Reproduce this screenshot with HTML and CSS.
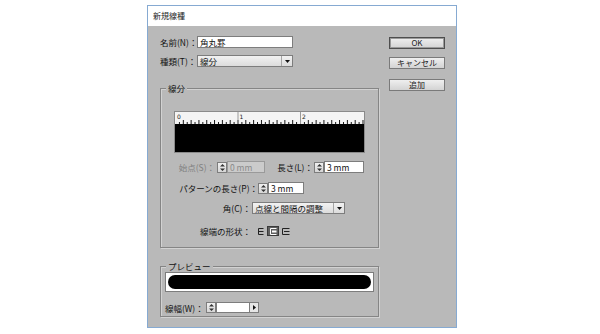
FILE: index.html
```html
<!DOCTYPE html>
<html lang="ja">
<head>
<meta charset="utf-8">
<title>新規線種</title>
<link rel="stylesheet" href="styles.css">
</head>
<body>
<div class="dialog">
  <div class="titlebar">新規線種</div>
  <div class="body">
    <div class="main">
      <div class="row row-name">
        <span class="lbl lbl-top">名前(N)：</span>
        <span class="field field-name">角丸罫</span>
      </div>
      <div class="row row-type">
        <span class="lbl lbl-top">種類(T)：</span>
        <span class="select select-type"><span class="sel-text">線分</span><span class="sel-arrow"><svg width="5" height="3" viewBox="0 0 5 3"><path d="M0 0H5L2.5 3Z" fill="#111"/></svg></span></span>
      </div>

      <div class="group group-dash">
        <span class="legend">線分</span>
        <div class="ruler">
          <svg width="189" height="40" viewBox="0 0 189 40">
            <defs>
              <pattern id="ticks" width="7.8125" height="12" patternUnits="userSpaceOnUse">
                <rect x="0" y="8" width="1" height="4" fill="#111"/>
                <rect x="3.9" y="10" width="1" height="2" fill="#111"/>
              </pattern>
            </defs>
            <rect x="0" y="0" width="189" height="12" fill="#f4f4f4"/>
            <rect x="1" y="0" width="188" height="12" fill="url(#ticks)"/>
            <rect x="62.5" y="0" width="1" height="12" fill="#9a9a9a"/>
            <rect x="125" y="0" width="1" height="12" fill="#9a9a9a"/>
            <text x="2" y="6.5" class="rtxt">0</text>
            <text x="64.5" y="6.5" class="rtxt">1</text>
            <text x="127" y="6.5" class="rtxt">2</text>
            <rect x="0" y="12" width="189" height="28" fill="#000"/>
          </svg>
        </div>

        <div class="row row-a">
          <span class="lbl lbl-start dim">始点(S)：</span>
          <span class="spin"><svg width="7" height="9" viewBox="0 0 7 9"><path d="M1 3.5L3.5 1L6 3.5Z M1 5.5L3.5 8L6 5.5Z" fill="#333"/></svg></span>
          <span class="field field-start disabled">0 mm</span>
          <span class="lbl lbl-len">長さ(L)：</span>
          <span class="spin"><svg width="7" height="9" viewBox="0 0 7 9"><path d="M1 3.5L3.5 1L6 3.5Z M1 5.5L3.5 8L6 5.5Z" fill="#333"/></svg></span>
          <span class="field field-len">3 mm</span>
        </div>

        <div class="row row-b">
          <span class="lbl lbl-pat">パターンの長さ(P)：</span>
          <span class="spin"><svg width="7" height="9" viewBox="0 0 7 9"><path d="M1 3.5L3.5 1L6 3.5Z M1 5.5L3.5 8L6 5.5Z" fill="#333"/></svg></span>
          <span class="field field-pat">3 mm</span>
        </div>

        <div class="row row-c">
          <span class="lbl lbl-corner">角(C)：</span>
          <span class="select select-corner"><span class="sel-text">点線と間隔の調整</span><span class="sel-arrow"><svg width="5" height="3" viewBox="0 0 5 3"><path d="M0 0H5L2.5 3Z" fill="#111"/></svg></span></span>
        </div>

        <div class="row row-d">
          <span class="lbl lbl-cap">線端の形状：</span>
          <span class="caps">
            <span class="cap"><svg width="6" height="7" viewBox="0 0 6 7"><path d="M5.5 0.5H0.5V6.5H5.5 M0.5 3.5H5.5" fill="none" stroke="#222" stroke-width="1"/></svg></span>
            <span class="cap cap-on"><svg width="8" height="7" viewBox="0 0 8 7"><path d="M7.5 0.5H1.5V6.5H7.5" fill="none" stroke="#fff" stroke-width="1"/><rect x="3" y="2.5" width="4.5" height="2" fill="#fff"/></svg></span>
            <span class="cap"><svg width="8" height="7" viewBox="0 0 8 7"><path d="M7.5 0.5H0.5V6.5H7.5" fill="none" stroke="#222" stroke-width="1"/><rect x="2" y="3" width="5.5" height="1" fill="#222"/></svg></span>
          </span>
        </div>
      </div>

      <div class="group group-preview">
        <span class="legend">プレビュー</span>
        <div class="preview"><div class="preview-bar"></div></div>
        <div class="row row-w">
          <span class="lbl lbl-w">線幅(W)：</span>
          <span class="spin"><svg width="7" height="9" viewBox="0 0 7 9"><path d="M1 3.5L3.5 1L6 3.5Z M1 5.5L3.5 8L6 5.5Z" fill="#333"/></svg></span>
          <span class="field field-w"></span>
          <span class="menu-btn"><svg width="3" height="5" viewBox="0 0 3 5"><path d="M0 0L3 2.5L0 5Z" fill="#111"/></svg></span>
        </div>
      </div>
    </div>

    <div class="side">
      <div class="btn btn-default">OK</div>
      <div class="btn btn-cancel">キャンセル</div>
      <div class="btn btn-add">追加</div>
    </div>
  </div>
</div>
</body>
</html>
```

FILE: styles.css
```css
html, body {
  margin: 0;
  padding: 0;
  background: #ffffff;
}

body {
  font-family: "Noto Sans CJK JP", "Noto Sans", sans-serif;
  font-size: 8.5px;
  color: #111;
  padding-top: 5px;
}

.dialog {
  margin-left: 147px;
  width: 310px;
  height: 323px;
  box-sizing: border-box;
  border: 1px solid #86aad2;
  background: #b9b9b9;
  display: flex;
  flex-direction: column;
}

.titlebar {
  height: 20px;
  background: #ffffff;
  padding-left: 5px;
  font-size: 8px;
  line-height: 20px;
  color: #222;
}

.body {
  display: flex;
  flex: 1;
}

.main {
  width: 219px;
  margin-left: 12px;
  padding-top: 10px;
  display: flex;
  flex-direction: column;
}

.side {
  width: 56px;
  margin-left: 10px;
  padding-top: 11px;
  display: flex;
  flex-direction: column;
}

.row {
  display: flex;
  align-items: center;
  height: 12px;
}

.lbl {
  text-align: right;
  white-space: nowrap;
  line-height: 12px;
  flex: none;
}

.dim {
  color: #808080;
}

.lbl-top { width: 36px; margin-right: 1px; }

.row-type { margin-top: 7px; }

.field {
  box-sizing: border-box;
  height: 12px;
  background: #ffffff;
  border: 1px solid #7d7d7d;
  padding-left: 2px;
  line-height: 10px;
  white-space: nowrap;
  flex: none;
}

.field-name { width: 96px; }

.select {
  box-sizing: border-box;
  height: 12px;
  display: flex;
  border: 1px solid #7d7d7d;
  background: linear-gradient(#f2f2f2, #dcdcdc);
  flex: none;
}

.sel-text {
  flex: 1;
  padding-left: 2px;
  line-height: 10px;
  white-space: nowrap;
}

.sel-arrow {
  width: 10px;
  border-left: 1px solid #a5a5a5;
  display: flex;
  align-items: center;
  justify-content: center;
}

.select-type { width: 96px; }

.group {
  position: relative;
  box-sizing: border-box;
  border: 1px solid #858585;
  box-shadow: inset 1px 1px 0 #d2d2d2, 1px 1px 0 #d2d2d2;
}

.legend {
  position: absolute;
  top: -6px;
  left: 5px;
  padding: 0 2px;
  background: #b9b9b9;
  line-height: 11px;
}

.group-dash {
  margin-top: 21px;
  height: 160px;
  padding: 23px 0 0 14px;
}

.ruler {
  width: 189px;
  height: 40px;
  outline: 1px solid #8a8a8a;
}

.ruler svg { display: block; }

.rtxt {
  font-family: "DejaVu Sans", sans-serif;
  font-size: 6px;
  fill: #222;
}

.spin {
  box-sizing: border-box;
  width: 10px;
  height: 11px;
  border: 1px solid #7d7d7d;
  background: linear-gradient(#f0f0f0, #d6d6d6);
  display: flex;
  align-items: center;
  justify-content: center;
  flex: none;
}

.spin svg { display: block; }

.row-a { margin-top: 9px; margin-left: -14px; }
.lbl-start { width: 54px; margin-right: 2px; }
.field-start { width: 38px; }
.field.disabled { background: #cbcbcb; border-color: #9a9a9a; color: #8a8a8a; }
.lbl-len { width: 38px; margin-left: 10px; margin-right: 1px; }
.field-len { width: 40px; }

.row-b { margin-top: 9px; margin-left: -14px; }
.lbl-pat { width: 97px; margin-right: 0; }
.field-pat { width: 36px; }

.row-c { margin-top: 8px; margin-left: -14px; }
.lbl-corner { width: 90px; margin-right: 1px; }
.select-corner { width: 93px; }

.row-d { margin-top: 11px; margin-left: -14px; }
.lbl-cap { width: 90px; margin-right: 7px; }

.caps {
  display: flex;
  align-items: center;
  gap: 3px;
}

.cap {
  box-sizing: border-box;
  height: 10px;
  display: flex;
  align-items: center;
  justify-content: center;
}

.cap-on {
  width: 12px;
  background: #5e5e5e;
  border: 1px solid #3a3a3a;
}

.group-preview {
  margin-top: 18px;
  height: 51px;
  padding: 5px 0 0 4px;
}

.preview {
  box-sizing: border-box;
  width: 209px;
  height: 20px;
  background: #ffffff;
  border: 1px solid #7d7d7d;
  padding: 2px 2px 2px 2px;
}

.preview-bar {
  height: 14px;
  background: #000;
  border-radius: 7px;
}

.row-w { margin-top: 10px; height: 11px; }
.lbl-w { width: 38px; margin-right: 3px; }
.field-w { width: 33px; height: 11px; border-right: none; }

.menu-btn {
  box-sizing: border-box;
  width: 10px;
  height: 11px;
  background: #e6e6e6;
  border: 1px solid #7d7d7d;
  display: flex;
  align-items: center;
  justify-content: center;
}

.btn {
  box-sizing: border-box;
  height: 12px;
  border: 1px solid #7a7a7a;
  background: linear-gradient(#efefef, #d3d3d3);
  text-align: center;
  font-size: 8px;
  line-height: 10px;
  color: #222;
}

.btn-default { border-color: #4e4e4e; box-shadow: inset 0 0 0 1px #9a9a9a; }
.btn-cancel { margin-top: 8px; }
.btn-add { margin-top: 10px; }
```
